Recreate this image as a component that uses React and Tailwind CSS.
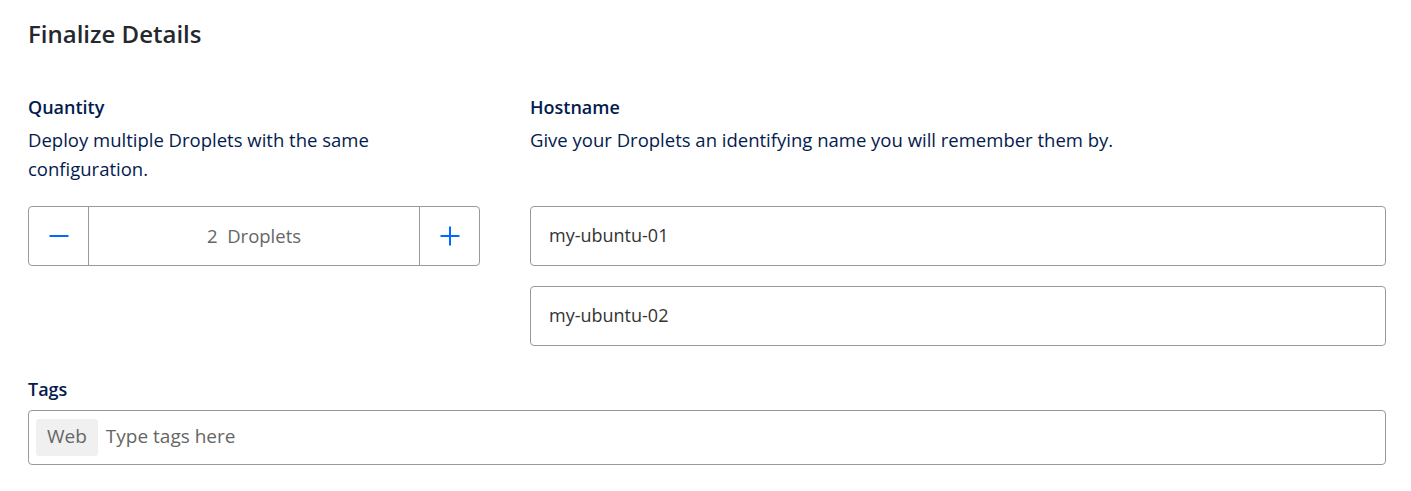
import { Minus, Plus } from 'lucide-react';

export default function App() {
  const hostnames = ['my-ubuntu-01', 'my-ubuntu-02'];

  return (
    <div className="bg-white min-h-screen pl-[28px] pr-[25px] pt-[18px] text-[#031b4e]" style={{ fontFamily: '"Open Sans", sans-serif' }}>
      <h2 className="text-[24px] font-semibold text-[#24292e] leading-[32px]">Finalize Details</h2>

      <div className="mt-[45px] flex gap-[50px]">
        {/* Quantity */}
        <div className="w-[452px] shrink-0">
          <h3 className="text-[18px] font-semibold leading-[24px]">Quantity</h3>
          <p className="mt-[6px] text-[18.5px] leading-[29px] pr-[40px]">
            Deploy multiple Droplets with the same configuration.
          </p>
          <div className="mt-[23px] flex h-[60px] border border-[#999] rounded-[4px]">
            <button className="w-[60px] flex items-center justify-center border-r border-[#999] text-[#0069ff]">
              <Minus size={30} strokeWidth={1.6} />
            </button>
            <div className="flex-1 flex items-center justify-center pb-[1px] text-[18.5px] text-[#666]">2&nbsp; Droplets</div>
            <button className="w-[60px] flex items-center justify-center border-l border-[#999] text-[#0069ff]">
              <Plus size={30} strokeWidth={1.6} />
            </button>
          </div>
        </div>

        {/* Hostname */}
        <div className="flex-1">
          <h3 className="text-[18px] font-semibold leading-[24px]">Hostname</h3>
          <p className="mt-[6px] text-[18.5px] leading-[29px]">
            Give your Droplets an identifying name you will remember them by.
          </p>
          <div className="mt-[52px] flex flex-col gap-[20px]">
            {hostnames.map((h) => (
              <div key={h} className="h-[60px] border border-[#999] rounded-[4px] flex items-center px-[18px] pb-[1px] text-[18px] text-[#333]">
                {h}
              </div>
            ))}
          </div>
        </div>
      </div>

      {/* Tags */}
      <h3 className="mt-[31px] text-[18px] font-semibold leading-[24px]">Tags</h3>
      <div className="mt-[9px] h-[55px] border border-[#999] rounded-[4px] flex items-center pl-[7px] pr-[8px] gap-[8px]">
        <span className="h-[37px] px-[11px] pb-[2px] flex items-center bg-[#f0f0f0] rounded-[3px] text-[19px] text-[#666]">Web</span>
        <span className="pb-[2px] text-[19px] text-[#666]">Type tags here</span>
      </div>
    </div>
  );
}
